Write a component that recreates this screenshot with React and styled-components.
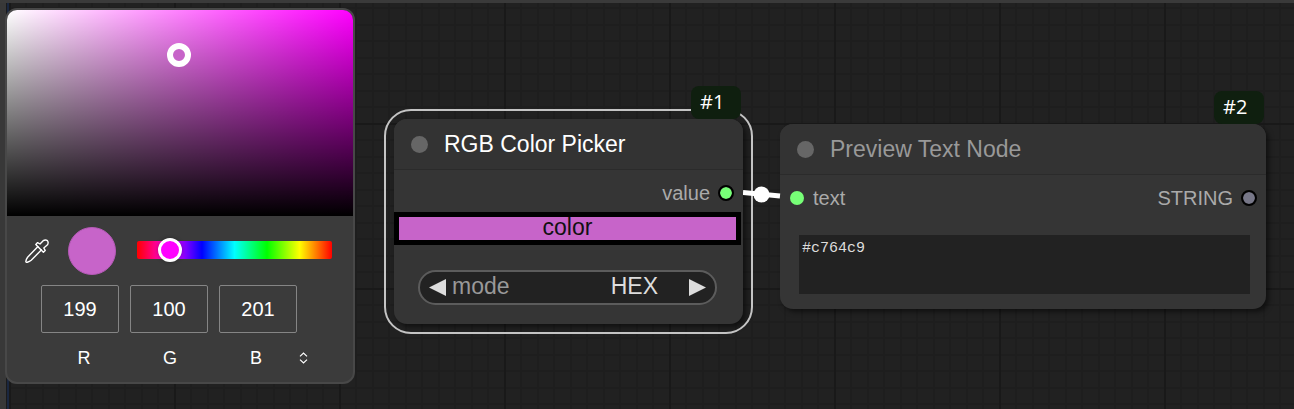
import React, { useState } from "react";
import styled, { createGlobalStyle } from "styled-components";

const GlobalStyle = createGlobalStyle`
  *, *::before, *::after { box-sizing: border-box; }
  body {
    margin: 0;
    background: #222;
    font-family: "Liberation Sans", Arial, sans-serif;
  }
  button, input, select, textarea { font: inherit; color: inherit; margin: 0; }
`;

const Page = styled.div`
  position: relative;
  display: flex;
  flex-direction: column;
  min-height: 100vh;
  overflow: hidden;
`;

const TopBar = styled.header`
  height: 3px;
  background: #3a3a3a;
`;

const Workspace = styled.div`
  flex: 1;
  display: flex;
`;

const SideRail = styled.aside`
  width: 7px;
  background: #383838;
  border-right: 1px solid #1b1b1b;
`;

const Canvas = styled.main`
  position: relative;
  flex: 1;
  border-left: 2px solid #1a2740;
  background-color: #212121;
  background-image:
    linear-gradient(90deg, #191919 2px, transparent 2px),
    linear-gradient(#191919 2px, transparent 2px),
    linear-gradient(90deg, #1e1e1e 2px, transparent 2px 16px, #1e1e1e 16px 18px, transparent 18px),
    linear-gradient(#1e1e1e 2px, transparent 2px 16px, #1e1e1e 16px 18px, transparent 18px);
  background-size: 165px 165px, 165px 165px, 33px 33px, 33px 33px;
  background-position: 0 0, 0 120px, 0 0, 0 21px;
`;

const Link = styled.svg`
  position: absolute;
  left: 734px;
  top: 179px;
  width: 38px;
  height: 24px;
`;

const Node = styled.section`
  position: absolute;
  left: ${(p) => p.$x}px;
  top: ${(p) => p.$y}px;
  width: ${(p) => p.$width}px;
  background: #353535;
  border-radius: 13px;
  box-shadow: 3px 3px 5px rgba(0, 0, 0, 0.5);
`;

const SelectionRing = styled.div`
  position: absolute;
  inset: -10px;
  border: 2px solid #c4c4c4;
  border-radius: 27px;
  pointer-events: none;
`;

const Badge = styled.span`
  position: absolute;
  right: 2px;
  bottom: 100%;
  width: 50px;
  height: 33px;
  padding-left: 9px;
  border-radius: 8px;
  background: #0f1f0f;
  color: #fff;
  font: 20px/32px "Open Sans", "Noto Sans", sans-serif;
`;

const NodeHeader = styled.header`
  display: flex;
  align-items: center;
  gap: 16px;
  height: 51px;
  padding: 0 17px;
  border-bottom: 1px solid #2b2b2b;
  border-radius: 13px 13px 0 0;
  background: #333;
`;

const StatusDot = styled.span`
  width: 17px;
  height: 17px;
  border-radius: 50%;
  background: #666;
`;

const NodeTitle = styled.h2`
  margin: 0;
  font-size: 23px;
  font-weight: 400;
  line-height: 28px;
  color: ${(p) => (p.$active ? "#fff" : "#999")};
`;

const SlotRow = styled.div`
  display: flex;
  align-items: center;
  justify-content: ${(p) => (p.$outputOnly ? "flex-end" : "space-between")};
  height: 46px;
  padding: 0 9px;
`;

const Slot = styled.span`
  display: flex;
  align-items: center;
  gap: 8px;
  font-size: 20px;
  line-height: 24px;
  color: #aaa;
`;

const Port = styled.span`
  width: 16px;
  height: 16px;
  border: ${(p) => (p.$output ? "2px solid #000" : "1px solid transparent")};
  border-radius: 50%;
  background: ${(p) => p.$color} padding-box;
`;

const ColorWidget = styled.button`
  display: block;
  width: calc(100% - 2px);
  height: 33px;
  margin-top: -4px;
  padding: 0 0 3px;
  border: 5px solid #000;
  background: #c764c9;
  color: #111;
  font-size: 23px;
  line-height: 20px;
  text-align: center;
`;

const ComboWidget = styled.div`
  display: flex;
  align-items: center;
  height: 35px;
  margin: 25px 26px 0 24px;
  padding: 0 9px;
  border: 2px solid #5c5c5c;
  border-radius: 18px;
  background: #222;
  font-size: 23px;
  line-height: 28px;
`;

const ComboLabel = styled.label`
  margin: 0 auto 4px 6px;
  color: #999;
`;

const ComboSelect = styled.select`
  appearance: none;
  width: 80px;
  height: 28px;
  margin: 0 31px 4px 0;
  padding: 0;
  border: 0;
  background: transparent;
  color: #ddd;
  text-align: right;
  text-align-last: right;
`;

const ArrowButton = styled.button`
  display: flex;
  padding: 0;
  border: 0;
  background: transparent;
  color: #ddd;

  svg { width: 17px; height: 17px; }
`;

const NodeFooter = styled.div`
  height: 19px;
`;

const TextWidget = styled.textarea`
  display: block;
  width: calc(100% - 35px);
  height: 59px;
  margin: 14px 16px 15px 19px;
  padding: 5px 3px;
  border: 0;
  outline: 0;
  resize: none;
  background: #222;
  color: #ddd;
  font-family: "Liberation Mono", monospace;
  font-size: 15px;
  line-height: 18px;
`;

const Picker = styled.div`
  position: absolute;
  left: 5px;
  top: 8px;
  width: 350px;
  overflow: hidden;
  border: 2px solid #484848;
  border-radius: 12px;
  background: #3b3b3b;
  color: #fff;
`;

const ColorArea = styled.div`
  position: relative;
  height: 206px;
  background:
    linear-gradient(to top, #000, transparent),
    linear-gradient(to right, #fff, #f0f);
`;

const AreaHandle = styled.span`
  position: absolute;
  left: 160px;
  top: 33px;
  width: 24px;
  height: 24px;
  border: 6px solid #fff;
  border-radius: 50%;
  background: #c764c9;
`;

const PickerControls = styled.div`
  display: flex;
  align-items: center;
  padding: 11px 21px 10px 18px;
`;

const EyedropperButton = styled.button`
  display: flex;
  padding: 0;
  border: 0;
  background: transparent;

  svg { width: 24px; height: 24px; }
`;

const Swatch = styled.span`
  width: 48px;
  height: 48px;
  margin: 0 21px 0 19px;
  border: 1px solid #b45ab6;
  border-radius: 50%;
  background: #c764c9;
`;

const HueTrack = styled.div`
  flex: 1;
  display: flex;
  align-items: center;
  height: 18px;
  margin-bottom: 2px;
  border-radius: 2px;
  background: linear-gradient(to right, #f00, #f0f, #00f, #0ff, #0f0, #ff0, #f00);
`;

const HueSlider = styled.input`
  appearance: none;
  flex: none;
  width: calc(100% + 24px);
  height: 24px;
  margin: 0 -12px;
  background: transparent;

  &::-webkit-slider-thumb {
    appearance: none;
    width: 24px;
    height: 24px;
    border: 3px solid #fff;
    border-radius: 50%;
    background: #f0f;
    box-shadow: 0 0 4px rgba(0, 0, 0, 0.3);
  }
`;

const ChannelRow = styled.div`
  display: flex;
  gap: 11px;
  padding: 0 34px;
`;

const ChannelInput = styled.input`
  width: 78px;
  height: 48px;
  padding: 0;
  border: 1px solid #858585;
  border-radius: 2px;
  background: transparent;
  font-size: 20px;
  text-align: center;
`;

const LabelRow = styled.div`
  display: flex;
  align-items: center;
  padding: 13px 34px 12px;
`;

const ChannelLabel = styled.label`
  width: 86px;
  font-size: 18px;
  line-height: 24px;
  text-align: center;
`;

const FormatButton = styled.button`
  display: flex;
  padding: 0;
  border: 0;
  background: transparent;

  svg { width: 9px; height: 12px; }
`;

const channels = [
  { name: "R", value: 199 },
  { name: "G", value: 100 },
  { name: "B", value: 201 },
];

function ColorPickerPopup() {
  const [hue, setHue] = useState(60);
  return (
    <Picker>
      <ColorArea>
        <AreaHandle />
      </ColorArea>
      <PickerControls>
        <EyedropperButton type="button" aria-label="Pick from screen">
          <svg viewBox="0 0 24 24" fill="none" stroke="#fff" strokeWidth="1.4" strokeLinejoin="round">
            <path d="M13.2 7.2 2.6 18.2 Q1.2 20 .8 22.6 Q1.2 23.7 2.3 23.2 Q4.6 22.6 6.2 21.2 L16.8 10.6" />
            <path d="M10.8 5.4 12.6 3.6 15 5 18.2 1.7 Q20.4 .2 22.4 1.6 Q23.8 3.4 22.5 5.8 L18.8 9 20.2 11.4 18.4 13.2 Z" />
          </svg>
        </EyedropperButton>
        <Swatch />
        <HueTrack>
          <HueSlider
            type="range"
            min="0"
            max="360"
            value={hue}
            aria-label="Hue"
            onChange={(e) => setHue(Number(e.target.value))}
          />
        </HueTrack>
      </PickerControls>
      <ChannelRow>
        {channels.map((c) => (
          <ChannelInput key={c.name} id={`channel-${c.name}`} type="text" defaultValue={c.value} />
        ))}
      </ChannelRow>
      <LabelRow>
        {channels.map((c) => (
          <ChannelLabel key={c.name} htmlFor={`channel-${c.name}`}>
            {c.name}
          </ChannelLabel>
        ))}
        <FormatButton type="button" aria-label="Change format">
          <svg viewBox="0 0 9 12" fill="none" stroke="#fff" strokeWidth="1.2">
            <path d="M1 4.4 4.5 1 8 4.4M1 7.6 4.5 11 8 7.6" />
          </svg>
        </FormatButton>
      </LabelRow>
    </Picker>
  );
}

function NodeTop({ badge, title, active }) {
  return (
    <>
      <Badge>{badge}</Badge>
      <NodeHeader>
        <StatusDot />
        <NodeTitle $active={active}>{title}</NodeTitle>
      </NodeHeader>
    </>
  );
}

export default function App() {
  return (
    <>
      <GlobalStyle />
      <Page>
        <TopBar />
        <Workspace>
          <SideRail />
          <Canvas>
            <Node $x={385} $y={116} $width={349}>
              <SelectionRing />
              <NodeTop badge="#1" title="RGB Color Picker" active />
              <SlotRow $outputOnly>
                <Slot>
                  value
                  <Port $output $color="#7f7" />
                </Slot>
              </SlotRow>
              <ColorWidget type="button">color</ColorWidget>
              <ComboWidget>
                <ArrowButton type="button" aria-label="Previous mode">
                  <svg viewBox="0 0 17 17" fill="currentColor"><path d="M17 0V17L0 8.5Z" /></svg>
                </ArrowButton>
                <ComboLabel htmlFor="mode">mode</ComboLabel>
                <ComboSelect id="mode" defaultValue="HEX">
                  <option>HEX</option>
                </ComboSelect>
                <ArrowButton type="button" aria-label="Next mode">
                  <svg viewBox="0 0 17 17" fill="currentColor"><path d="M0 0V17L17 8.5Z" /></svg>
                </ArrowButton>
              </ComboWidget>
              <NodeFooter />
            </Node>
            <Node $x={771} $y={121} $width={486}>
              <NodeTop badge="#2" title="Preview Text Node" />
              <SlotRow>
                <Slot>
                  <Port $color="#7f7" />
                  text
                </Slot>
                <Slot>
                  STRING
                  <Port $output $color="#778" />
                </Slot>
              </SlotRow>
              <TextWidget aria-label="Preview text" defaultValue="#c764c9" spellCheck={false} />
            </Node>
            <Link viewBox="0 0 38 24">
              <path d="M0 10.5 37 14" stroke="#fff" strokeWidth="5" />
              <circle cx="18.5" cy="12.5" r="8" fill="#fff" />
            </Link>
          </Canvas>
        </Workspace>
        <ColorPickerPopup />
      </Page>
    </>
  );
}
